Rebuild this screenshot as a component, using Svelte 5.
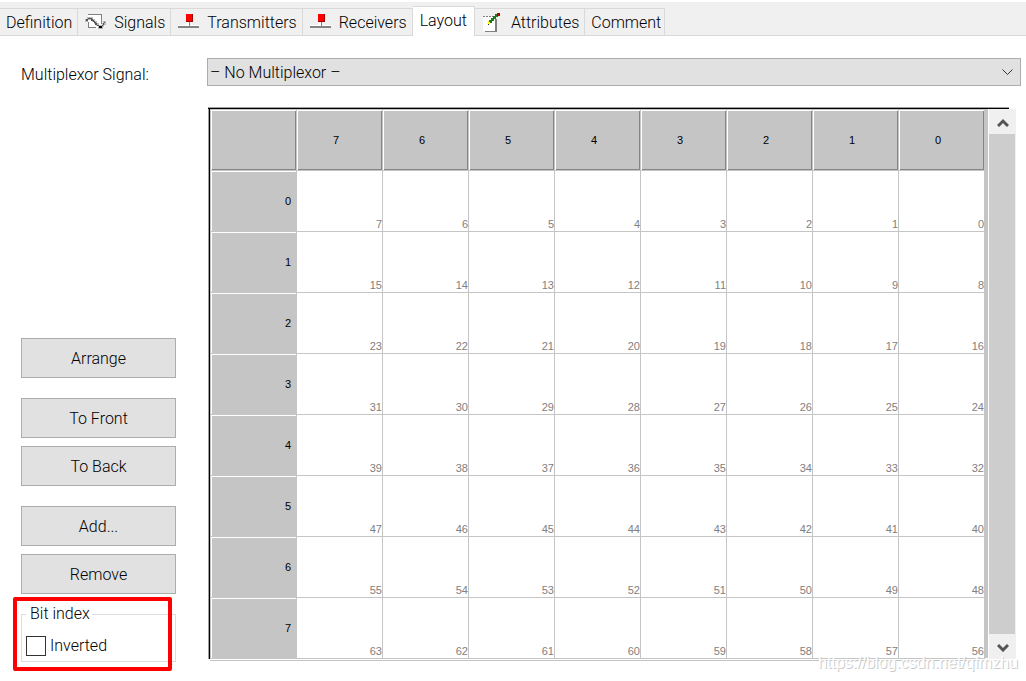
<script>
    const tabs = [
        { title: 'Definition' },
        { title: 'Signals', icon: 'signal' },
        { title: 'Transmitters', icon: 'node' },
        { title: 'Receivers', icon: 'node' },
        { title: 'Layout' },
        { title: 'Attributes', icon: 'note' },
        { title: 'Comment' }
    ];
    const groups = [['Arrange'], ['To Front', 'To Back'], ['Add...', 'Remove']];
    const bits = [7, 6, 5, 4, 3, 2, 1, 0];
    const bytes = [0, 1, 2, 3, 4, 5, 6, 7];

    let activeTab = $state('Layout');
    let inverted = $state(false);
</script>

<main>
    <div class="tabs" role="tablist">
        {#each tabs as tab}
            <button
                role="tab"
                class="tab"
                class:active={tab.title === activeTab}
                aria-selected={tab.title === activeTab}
                onclick={() => (activeTab = tab.title)}
            >
                {#if tab.icon === 'signal'}
                    <svg width="22" height="20" viewBox="0 0 22 20" shape-rendering="crispEdges">
                        <path d="M4 1h14v14H4z" fill="#fff" />
                        <path d="M4 1h14v1H4zM17 1h1v10h-1zM4 9h1v6H4zM4 14h8v1H4z" fill="#808080" />
                        <path d="M1 6h3v3H1zM3 4h6v3H3zM8 6h3v3H8zM10 8h3v3h-3zM12 10h3v3h-3zM14 12h5v4h-5zM18 10h2v4h-2zM19 8h3v4h-3z" fill="#b8b8b8" />
                        <path d="M2 6h2v2H2zM4 5h4v1H4zM7 6h2v2H7zM9 7h1v2H9zM9 8h2v1H9zM10 9h2v1h-2zM11 10h2v2h-2zM13 12h2v1h-2zM18 12h1v1h-1zM19 10h1v2h-1zM20 9h1v1h-1z" fill="#555" />
                        <path d="M15 13h3v2h-3z" fill="#000" />
                        <path d="M4 5h2v1H4z" fill="#704070" />
                    </svg>
                {:else if tab.icon === 'node'}
                    <svg width="22" height="20" viewBox="0 0 22 20" shape-rendering="crispEdges">
                        <path d="M9 10h4v3H9zM1 12h21v1H1z" fill="#fff" />
                        <path d="M12 9h1v4h-1zM1 13h21v2H1z" fill="#848484" />
                        <path d="M9 1h7v8H9z" fill="#a00000" />
                        <path d="M9 1h6v7H9z" fill="#f00" />
                    </svg>
                {:else if tab.icon === 'note'}
                    <svg width="22" height="20" viewBox="0 0 22 20" shape-rendering="crispEdges">
                        <path d="M2 3h12v15H2z" fill="#fff" />
                        <path d="M2 3h2v1H2zM5 3h2v1H5zM8 3h2v1H8zM11 3h1v1h-1zM14 6h2v13H4v-1h10z" fill="#808080" />
                        <path d="M14 1h3v3h-3zM12 3h3v3h-3zM10 5h3v3h-3zM8 7h3v3H8z" fill="#1d7a1d" />
                        <path d="M16 0h3v3h-3z" fill="#c00000" />
                        <path d="M14 2h1v1h-1zM12 4h1v1h-1zM10 6h1v1h-1z" fill="#805010" />
                        <path d="M7 8h1v1h1v2H7z" fill="#ff0" />
                        <path d="M7 11h1v1H7z" fill="#222" />
                    </svg>
                {/if}
                <span>{tab.title}</span>
            </button>
        {/each}
    </div>

    <div class="page">
        <label class="caption" for="mux">Multiplexor Signal:</label>
        <div class="combo">
            <select id="mux">
                <option>– No Multiplexor –</option>
            </select>
            <svg width="11" height="7" viewBox="0 0 11 7">
                <path d="M0.5 0.5l5 5 5-5" fill="none" stroke="#333" />
            </svg>
        </div>

        <aside>
            {#each groups as group}
                <div class="group">
                    {#each group as name}
                        <button class="push">{name}</button>
                    {/each}
                </div>
            {/each}
            <div class="marked">
                <fieldset>
                    <legend>Bit index</legend>
                    <label><input type="checkbox" bind:checked={inverted} />Inverted</label>
                </fieldset>
            </div>
        </aside>

        <div class="frame">
            <div class="grid">
                <table>
                    <thead>
                        <tr>
                            <td class="corner"></td>
                            {#each bits as bit}
                                <th scope="col">{bit}</th>
                            {/each}
                        </tr>
                    </thead>
                    <tbody>
                        {#each bytes as byte}
                            <tr>
                                <th scope="row">{byte}</th>
                                {#each bits as bit}
                                    <td>{(inverted ? 7 - byte : byte) * 8 + bit}</td>
                                {/each}
                            </tr>
                        {/each}
                    </tbody>
                </table>
            </div>
            <div class="scrollbar">
                <button aria-label="Scroll up">
                    <svg width="12" height="10" viewBox="0 0 12 10"><path d="M1 9l5-5 5 5" /></svg>
                </button>
                <div class="thumb"></div>
                <button aria-label="Scroll down">
                    <svg width="12" height="10" viewBox="0 0 12 10"><path d="M1 3l5 5 5-5" /></svg>
                </button>
            </div>
        </div>
    </div>

    <div class="watermark">https://blog.csdn.net/qfmzhu</div>
</main>

<style>
    :global(body) {
        background: #fff;
    }

    main {
        position: relative;
        min-height: 100vh;
        padding-top: 2px;
        box-sizing: border-box;
        font-family: Roboto, 'Liberation Sans', sans-serif;
        font-size: 16px;
        font-weight: 300;
        line-height: 20px;
        color: #000;
    }

    button,
    select {
        font: inherit;
        color: inherit;
        border-radius: 0;
    }

    .tabs {
        display: flex;
        align-items: flex-end;
        height: 34px;
        background: #f0f0f0;
        box-shadow: inset 0 -1px #d9d9d9;
    }
    .tab {
        display: flex;
        align-items: center;
        gap: 8px;
        height: 28px;
        padding: 2px 5px 0 6px;
        background: none;
        border: 1px solid #d9d9d9;
        border-left: 0;
        white-space: nowrap;
    }
    .tab:last-child {
        padding-right: 3px;
    }
    .tab.active {
        height: 30px;
        padding: 0 7px 2px;
        background: #fff;
        border-bottom: 0;
    }

    .page {
        display: grid;
        grid-template-columns: 155px minmax(0, 1fr);
        column-gap: 31px;
        row-gap: 21px;
        padding: 22px 5px 0 21px;
    }
    .caption {
        padding-top: 7px;
    }

    .combo {
        position: relative;
    }
    .combo select {
        display: block;
        width: 100%;
        height: 28px;
        padding: 2px 2px 0;
        appearance: none;
        background: #e1e1e1;
        border: 1px solid #adadad;
    }
    .combo svg {
        position: absolute;
        top: 11px;
        right: 8px;
        pointer-events: none;
    }

    aside {
        display: flex;
        flex-direction: column;
        justify-content: flex-end;
        gap: 20px;
        margin-bottom: -1px;
    }
    .group {
        display: flex;
        flex-direction: column;
        gap: 8px;
    }
    .push {
        height: 40px;
        padding: 2px 6px 0;
        background: #e1e1e1;
        border: 1px solid #adadad;
    }

    .marked {
        position: relative;
        margin-top: -10px;
    }
    .marked::after {
        content: '';
        position: absolute;
        inset: -7px 4px -9px -8px;
        border: 4px solid #f00;
        border-radius: 2px;
        pointer-events: none;
    }
    fieldset {
        height: 58px;
        margin: 0;
        padding: 0 4px;
        box-sizing: border-box;
        border: 1px solid #dcdcdc;
    }
    legend {
        padding: 0 2px 0 4px;
    }
    fieldset label {
        display: flex;
        align-items: center;
        gap: 4px;
        padding-top: 12px;
    }
    input {
        appearance: none;
        width: 20px;
        height: 20px;
        margin: 0;
        background: #fff;
        border: 1px solid #333;
    }
    input:checked {
        background: #333;
        box-shadow: inset 0 0 0 4px #fff;
    }

    .frame {
        display: flex;
        margin: 0 5px 0 1px;
        padding: 2px 0 0 2px;
        background:
            linear-gradient(#a0a0a0 1px, #000 1px) 0 0 / calc(100% - 7px) 2px no-repeat,
            linear-gradient(90deg, #a0a0a0 1px, #000 1px) 0 0 / 2px calc(100% - 2px) no-repeat;
    }
    .grid {
        flex: 1;
        padding-right: 3px;
        background: linear-gradient(#c5c5c5, #c5c5c5) 0 0 / 100% calc(100% - 2px) no-repeat;
        border-bottom: 1px solid #c5c5c5;
    }
    table {
        width: 100%;
        margin-bottom: 1px;
        table-layout: fixed;
        border-collapse: separate;
        border-spacing: 0;
        border-top: 1px solid #c5c5c5;
        border-left: 1px solid #c5c5c5;
        font-family: 'Liberation Sans', sans-serif;
        font-size: 11px;
        line-height: 12px;
    }
    td,
    th {
        height: 61px;
        padding: 0;
        box-sizing: border-box;
        font-weight: 400;
    }
    thead th,
    .corner {
        padding-right: 7px;
        background: #c5c5c5;
        border-right: 1px solid #c5c5c5;
        border-bottom: 1px solid #c5c5c5;
        box-shadow: inset 1px 1px #fff, inset -1px -1px #848484;
    }
    tbody th {
        padding-right: 5px;
        text-align: right;
        background: #c5c5c5;
        border-right: 1px solid #c5c5c5;
        border-bottom: 1px solid #c5c5c5;
        box-shadow: inset 1px 1px #fff;
    }
    tbody td {
        padding-bottom: 1px;
        text-align: right;
        vertical-align: bottom;
        color: #808080;
        background: #fff;
        border-right: 1px solid #c5c5c5;
        border-bottom: 1px solid #c5c5c5;
    }

    .scrollbar {
        display: flex;
        flex-direction: column;
        width: 27px;
        margin: 0 0 2px 1px;
        background: #f0f0f0;
    }
    .scrollbar button {
        display: flex;
        align-items: center;
        justify-content: center;
        height: 25px;
        padding: 0;
        background: none;
        border: 0;
    }
    .scrollbar path {
        fill: none;
        stroke: #555;
        stroke-width: 3;
    }
    .thumb {
        flex: 1;
        margin-right: 1px;
        background: #cdcdcd;
    }

    .watermark {
        position: absolute;
        right: 8px;
        bottom: 8px;
        font-family: 'Liberation Sans', sans-serif;
        font-weight: 400;
        color: #fff;
        text-shadow: 1px 1px #ccc;
        pointer-events: none;
    }
</style>
